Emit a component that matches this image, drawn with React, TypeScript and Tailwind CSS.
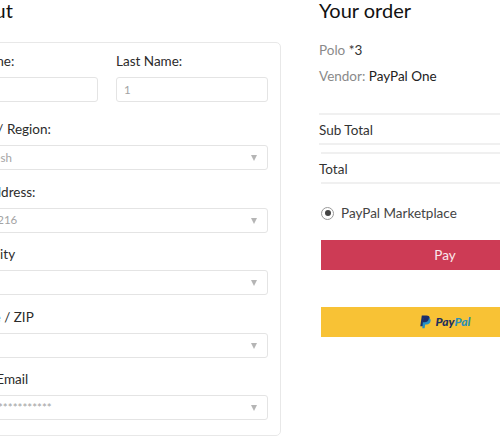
const font = { fontFamily: 'Lato, "Open Sans", sans-serif' };

function Caret() {
  return <span className="absolute right-[10px] top-[9px] h-0 w-0 border-x-[3.5px] border-t-[6px] border-x-transparent border-t-[#b5b5b5]" />;
}

function Field({ label, value, select, className }: { label: string; value?: string; select?: boolean; className?: string }) {
  return (
    <div className={className}>
      <label className="block h-[20px] text-[13.5px] leading-[19px] text-[#2b2b2b]">{label}</label>
      <div className="relative mt-[5px] flex h-[25px] items-center rounded-[3px] border border-[#e4e4e4] bg-white px-[7px] text-[11.5px] text-[#a3a3a3]">
        <span className="whitespace-nowrap">{value}</span>
        {select && <Caret />}
      </div>
    </div>
  );
}

export default function App() {
  return (
    <div className="h-[436px] w-[500px] overflow-hidden bg-white" style={font}>
      <div className="ml-[-68px] flex w-[700px] items-start">
        <div className="w-[349px] shrink-0">
          <h2 className="ml-[-3px] h-[42px] text-[20px] leading-[20px] text-[#111]">Checkout</h2>
          <div className="flex h-[394px] flex-col gap-[12.5px] rounded-[5px] border border-[#e8e8e8] pl-[13px] pr-[12px] pt-[9px]">
            <div className="mb-[5.5px] flex gap-[18px]">
              <Field className="w-[152px]" label="First Name:" value="" />
              <Field className="w-[152px]" label="Last Name:" value="1" />
            </div>
            <Field label="Country / Region:" value="Bangladesh" select />
            <Field label="Street Address:" value="Dhaka-1216" select />
            <Field label="Town / City" select />
            <Field label="Postcode / ZIP" select />
            <Field label="Contact Email" value="********************" select />
          </div>
        </div>
        <div className="ml-[38px] w-[300px] shrink-0">
          <h2 className="h-[41px] text-[20px] leading-[20px] text-[#111]">Your order</h2>
          <p className="text-[13.5px] leading-[18px] text-[#8a8a8a]">Polo <span className="text-[#333]">*3</span></p>
          <p className="mt-[8px] text-[13.5px] leading-[18px] text-[#8a8a8a]">Vendor: <span className="text-[#222]">PayPal One</span></p>
          <div className="mt-[28px] flex h-[32px] items-center border-y-2 border-[#f0f0f0] pt-[3px] text-[13.5px] text-[#333]">Sub Total</div>
          <div className="ml-[2px] mt-[7px] flex h-[32px] items-center border-y-2 border-[#f0f0f0] pt-[3px] text-[13.5px] text-[#333]">
            <span className="ml-[-2px]">Total</span>
          </div>
          <div className="ml-[2px] mt-[19px] flex items-center gap-[7px] text-[13.5px] leading-[20px] text-[#444]">
            <span className="flex h-[13px] w-[13px] items-center justify-center rounded-full border border-[#999]">
              <span className="h-[6px] w-[6px] rounded-full bg-[#444]" />
            </span>
            PayPal Marketplace
          </div>
          <button className="ml-[2px] mt-[17px] block h-[30px] w-[248px] bg-[#cd3b55] text-[13.5px] text-[#fbe9ec]">Pay</button>
          <div className="ml-[2px] mt-[37px] flex h-[30px] w-[248px] items-center justify-center gap-[5px] bg-[#f8c235]">
            <svg width="11" height="14" viewBox="0 0 11 14">
              <path d="M1.8 0.5h4.6c2.4 0 3.6 1.2 3.2 3.3-.4 2.3-2 3.5-4.2 3.5H3.6l-.7 4H.3z" fill="#1a2f6b" />
              <path d="M3.2 3h4.4c2.2 0 3.4 1 3 3-.4 2.2-1.8 3.4-4 3.4H5.2l-.6 3.9H2.3z" fill="#2790c3" />
              <path d="M3.2 3h4.4c.5 0 1 .1 1.4.2C8.6 5.6 7 7.3 4.6 7.3H2.9l.3-4.3z" fill="#1f2a66" />
            </svg>
            <span className="text-[12px] font-black italic leading-none"><span className="text-[#1f2f5c]">Pay</span><span className="text-[#2d8fb5]">Pal</span></span>
          </div>
        </div>
      </div>
    </div>
  );
}
